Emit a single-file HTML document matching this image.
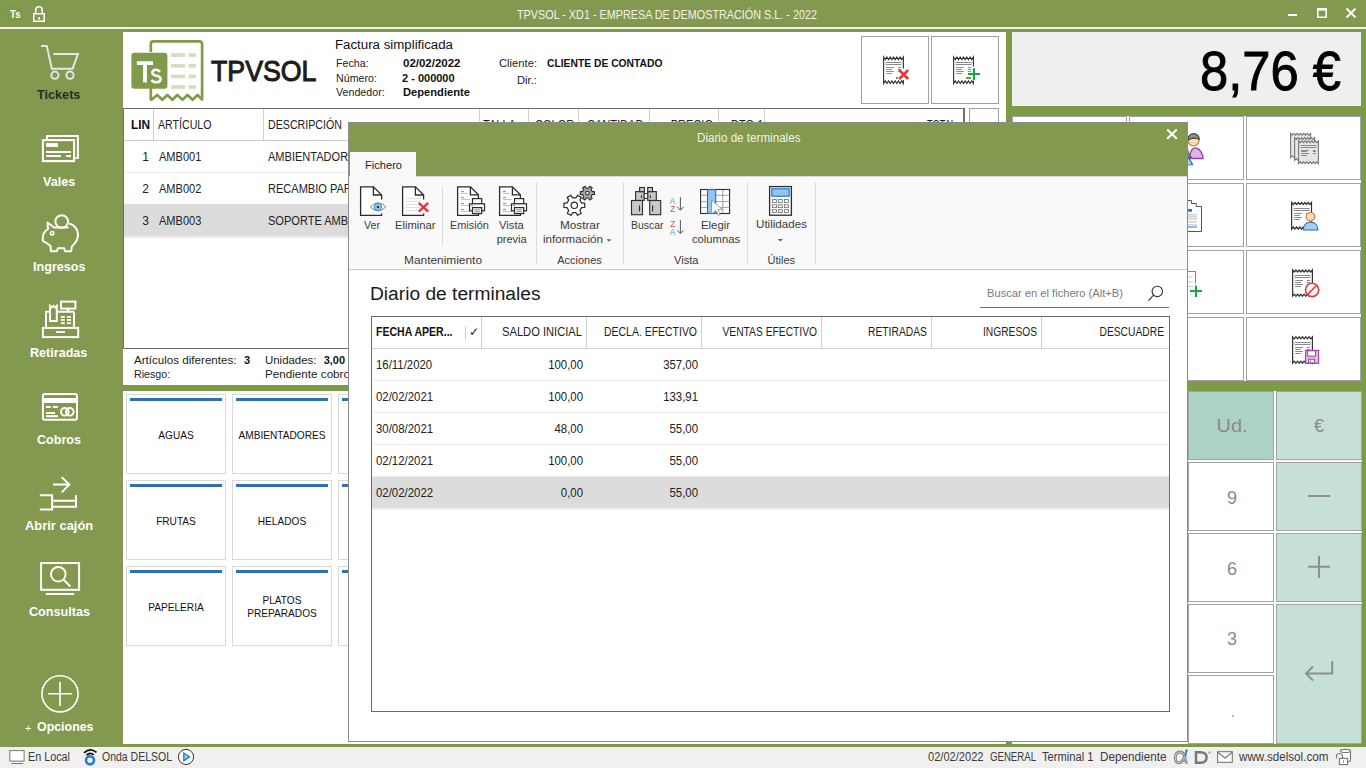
<!DOCTYPE html>
<html><head><meta charset="utf-8"><style>
html,body{margin:0;padding:0;width:1366px;height:768px;overflow:hidden;background:#83994f;font-family:"Liberation Sans", sans-serif;}
body>div,body>svg{position:absolute;box-sizing:border-box;}
.t{white-space:pre;}
</style></head><body>
<div style="left:0px;top:0px;width:1366px;height:27px;background:#83994f"></div>
<div style="left:0px;top:27px;width:1366px;height:2px;background:#f2f2f2"></div>
<div style="left:0px;top:29px;width:1366px;height:718px;background:#7d9a48"></div>
<div style="left:0px;top:29px;width:123px;height:718px;background:#83994f"></div>
<div style="left:123px;top:32px;width:883px;height:353px;background:#fff"></div>
<div style="left:123px;top:391px;width:883px;height:353px;background:#fff"></div>
<div style="left:1012px;top:32px;width:349px;height:74px;background:#efefef"></div>
<div style="left:1012px;top:116px;width:349px;height:265px;background:#fff"></div>
<div style="left:1012px;top:116px;width:115px;height:64px;border:1px solid #a3a3a3;background:#fff"></div>
<div style="left:1129px;top:116px;width:115px;height:64px;border:1px solid #a3a3a3;background:#fff"></div>
<div style="left:1246px;top:116px;width:115px;height:64px;border:1px solid #a3a3a3;background:#fff"></div>
<div style="left:1012px;top:183px;width:115px;height:64px;border:1px solid #a3a3a3;background:#fff"></div>
<div style="left:1129px;top:183px;width:115px;height:64px;border:1px solid #a3a3a3;background:#fff"></div>
<div style="left:1246px;top:183px;width:115px;height:64px;border:1px solid #a3a3a3;background:#fff"></div>
<div style="left:1012px;top:250px;width:115px;height:64px;border:1px solid #a3a3a3;background:#fff"></div>
<div style="left:1129px;top:250px;width:115px;height:64px;border:1px solid #a3a3a3;background:#fff"></div>
<div style="left:1246px;top:250px;width:115px;height:64px;border:1px solid #a3a3a3;background:#fff"></div>
<div style="left:1012px;top:317px;width:115px;height:64px;border:1px solid #a3a3a3;background:#fff"></div>
<div style="left:1129px;top:317px;width:115px;height:64px;border:1px solid #a3a3a3;background:#fff"></div>
<div style="left:1246px;top:317px;width:115px;height:64px;border:1px solid #a3a3a3;background:#fff"></div>
<div style="left:1012px;top:391px;width:350px;height:353px;background:#fff"></div>
<div style="left:1188px;top:391px;width:86px;height:69px;border:1px solid #a3a3a3;background:#acd3c4"></div>
<div style="left:1188px;top:462px;width:86px;height:69px;border:1px solid #a3a3a3;background:#fff"></div>
<div style="left:1188px;top:533px;width:86px;height:69px;border:1px solid #a3a3a3;background:#fff"></div>
<div style="left:1188px;top:604px;width:86px;height:69px;border:1px solid #a3a3a3;background:#fff"></div>
<div style="left:1188px;top:675px;width:86px;height:69px;border:1px solid #a3a3a3;background:#fff"></div>
<div style="left:1276px;top:391px;width:86px;height:69px;border:1px solid #a3a3a3;background:#c6e0d5"></div>
<div style="left:1276px;top:462px;width:86px;height:69px;border:1px solid #a3a3a3;background:#c6e0d5"></div>
<div style="left:1276px;top:533px;width:86px;height:69px;border:1px solid #a3a3a3;background:#c6e0d5"></div>
<div style="left:1276px;top:604px;width:86px;height:140px;border:1px solid #a3a3a3;background:#c6e0d5"></div>
<div style="left:0px;top:747px;width:1366px;height:21px;background:#f0f0f0"></div>
<div style="left:861px;top:36px;width:68px;height:68px;border:1px solid #a0a0a0;background:#fff"></div>
<div style="left:931px;top:36px;width:68px;height:68px;border:1px solid #a0a0a0;background:#fff"></div>
<div style="left:123px;top:108px;width:842px;height:241px;border:1px solid #6e6e6e;border-right:2px solid #6e6e6e"></div>
<div style="left:124px;top:140px;width:840px;height:1px;background:#c8c8c8"></div>
<div style="left:153px;top:109px;width:1px;height:31px;background:#d0d0d0"></div>
<div style="left:263px;top:109px;width:1px;height:31px;background:#d0d0d0"></div>
<div style="left:479px;top:109px;width:1px;height:31px;background:#d0d0d0"></div>
<div style="left:528px;top:109px;width:1px;height:31px;background:#d0d0d0"></div>
<div style="left:578px;top:109px;width:1px;height:31px;background:#d0d0d0"></div>
<div style="left:649px;top:109px;width:1px;height:31px;background:#d0d0d0"></div>
<div style="left:718px;top:109px;width:1px;height:31px;background:#d0d0d0"></div>
<div style="left:764px;top:109px;width:1px;height:31px;background:#d0d0d0"></div>
<div style="left:124px;top:172px;width:840px;height:1px;background:#ececec"></div>
<div style="left:124px;top:204px;width:840px;height:32px;background:#dcdcdc"></div>
<div style="left:124px;top:236px;width:840px;height:2px;background:#ececec"></div>
<div style="left:969px;top:108px;width:30px;height:30px;border:1px solid #a0a0a0"></div>
<div style="left:126px;top:394px;width:100px;height:80px;border:1px solid #d9d9d9;background:#fff"></div>
<div style="left:130px;top:398px;width:92px;height:3px;background:#2f70b5"></div>
<div style="left:232px;top:394px;width:100px;height:80px;border:1px solid #d9d9d9;background:#fff"></div>
<div style="left:236px;top:398px;width:92px;height:3px;background:#2f70b5"></div>
<div style="left:338px;top:394px;width:100px;height:80px;border:1px solid #d9d9d9;background:#fff"></div>
<div style="left:342px;top:398px;width:92px;height:3px;background:#2f70b5"></div>
<div style="left:126px;top:480px;width:100px;height:80px;border:1px solid #d9d9d9;background:#fff"></div>
<div style="left:130px;top:484px;width:92px;height:3px;background:#2f70b5"></div>
<div style="left:232px;top:480px;width:100px;height:80px;border:1px solid #d9d9d9;background:#fff"></div>
<div style="left:236px;top:484px;width:92px;height:3px;background:#2f70b5"></div>
<div style="left:338px;top:480px;width:100px;height:80px;border:1px solid #d9d9d9;background:#fff"></div>
<div style="left:342px;top:484px;width:92px;height:3px;background:#2f70b5"></div>
<div style="left:126px;top:566px;width:100px;height:80px;border:1px solid #d9d9d9;background:#fff"></div>
<div style="left:130px;top:570px;width:92px;height:3px;background:#2f70b5"></div>
<div style="left:232px;top:566px;width:100px;height:80px;border:1px solid #d9d9d9;background:#fff"></div>
<div style="left:236px;top:570px;width:92px;height:3px;background:#2f70b5"></div>
<div style="left:338px;top:566px;width:100px;height:80px;border:1px solid #d9d9d9;background:#fff"></div>
<div style="left:342px;top:570px;width:92px;height:3px;background:#2f70b5"></div>
<svg style="left:0;top:0" width="1366" height="768" viewBox="0 0 1366 768"><rect x="7.5" y="6" width="14.5" height="15" fill="#7a9a48"/><path d="M33.8 13.8 H44.2 V21.2 H33.8 Z" fill="none" stroke="#fff" stroke-width="1.5"/><path d="M35.8 13.8 V10 A3.2 3.2 0 0 1 42.2 10 V13.8" fill="none" stroke="#fff" stroke-width="1.5"/><rect x="38.2" y="17" width="1.8" height="2.6" fill="#fff"/><rect x="1288" y="14" width="9" height="2" fill="#fff"/><path d="M1317.8 8.8 H1326.2 V17.2 H1317.8 Z" fill="none" stroke="#fff" stroke-width="1.6"/><rect x="1317" y="8" width="10" height="2.6" fill="#fff"/><path d="M1346.5 8.5 L1355.5 17.5 M1355.5 8.5 L1346.5 17.5" stroke="#fff" stroke-width="1.8"/><path d="M41 45.9 H46.8 L51.8 68.7 H72.6 L77.9 54 H53.3" fill="none" stroke="#e6e6e6" stroke-width="2" stroke-linejoin="miter"/><circle cx="54.9" cy="75.2" r="3.6" fill="none" stroke="#e6e6e6" stroke-width="2"/><circle cx="70" cy="75.2" r="3.6" fill="none" stroke="#e6e6e6" stroke-width="2"/><path d="M47 139 V136 H77.9 V158 H75.5" fill="none" stroke="#ffffff" stroke-width="2"/><rect x="42.9" y="140.1" width="31.2" height="21" fill="none" stroke="#ffffff" stroke-width="2.1"/><rect x="46" y="143.1" width="12" height="3.8" fill="#ffffff"/><rect x="46" y="151" width="25" height="2" fill="#ffffff"/><rect x="46" y="155" width="15" height="2" fill="#ffffff"/><rect x="66" y="155" width="5" height="2" fill="#ffffff"/><circle cx="61.7" cy="221.5" r="6.3" fill="none" stroke="#ffffff" stroke-width="2"/><path d="M54.5 227.8 L47.5 222.5 L48 229 C45 231 43 234 43 236.5 C42.5 238 42.3 240 43.5 241.5 C46 242 48 244 50.5 246 L50.8 251.2 H56.8 L57.8 248.2 H64.2 L65.2 251.2 H71.2 L71.8 246.5 C76 243 78 239 78 234.5 C78 229 74 224.5 69 223.5 M54 227.6 H68.5" fill="none" stroke="#ffffff" stroke-width="2" stroke-linejoin="round"/><circle cx="52.1" cy="233.2" r="1.7" fill="none" stroke="#ffffff" stroke-width="1.6"/><rect x="61" y="301.6" width="14.4" height="7" fill="none" stroke="#ffffff" stroke-width="2"/><rect x="67" y="308.6" width="2.4" height="3" fill="#ffffff"/><path d="M50 311.8 H46 V327 M74 311.8 V327 M57.5 311.8 H74" fill="none" stroke="#ffffff" stroke-width="2"/><path d="M50 321 V306 L51.5 307.5 L53.3 305.8 L55 307.5 L56.8 305.8 V321 Z" fill="none" stroke="#ffffff" stroke-width="2" stroke-linejoin="miter"/><rect x="60.8" y="316" width="4" height="1.8" fill="#ffffff"/><rect x="67" y="316" width="4" height="1.8" fill="#ffffff"/><rect x="60.8" y="319" width="4" height="1.8" fill="#ffffff"/><rect x="67" y="319" width="4" height="1.8" fill="#ffffff"/><rect x="60.8" y="322.3" width="4" height="1.8" fill="#ffffff"/><rect x="67" y="322.3" width="4" height="1.8" fill="#ffffff"/><rect x="42.9" y="327.9" width="35.3" height="9.2" fill="none" stroke="#ffffff" stroke-width="2"/><rect x="56" y="331.2" width="9" height="1.8" fill="#ffffff"/><rect x="42.9" y="394" width="34.1" height="25.8" rx="2" fill="none" stroke="#ffffff" stroke-width="2"/><rect x="43" y="398" width="34" height="5" fill="#ffffff"/><rect x="46" y="406" width="4.7" height="2" fill="#ffffff"/><rect x="52.8" y="406" width="5.2" height="2" fill="#ffffff"/><rect x="46" y="412" width="9" height="2" fill="#ffffff"/><rect x="46" y="415.2" width="12" height="2" fill="#ffffff"/><circle cx="64.8" cy="411.8" r="3.8" fill="none" stroke="#ffffff" stroke-width="2"/><circle cx="69.8" cy="411.8" r="3.8" fill="none" stroke="#ffffff" stroke-width="2"/><path d="M53 484.6 H69.5 M61.7 477.3 L69.3 484.6 L61.7 492.4" fill="none" stroke="#ffffff" stroke-width="2"/><path d="M39.8 495.2 H52.1 V509.5 H39.8 M52.1 500.8 H76 M52.1 506.7 H76 M76 495.2 V507.7" fill="none" stroke="#ffffff" stroke-width="2"/><rect x="41.1" y="563" width="38" height="26.8" fill="none" stroke="#ffffff" stroke-width="2"/><rect x="45.8" y="593" width="28.4" height="2" fill="#ffffff"/><circle cx="58.3" cy="574.2" r="7.3" fill="none" stroke="#ffffff" stroke-width="2"/><path d="M63.3 579.4 L70.4 586.5" stroke="#ffffff" stroke-width="2"/><circle cx="60" cy="693.8" r="18.1" fill="none" stroke="#ffffff" stroke-width="1.6"/><path d="M48 693.8 H72 M60 681.7 V706" stroke="#ffffff" stroke-width="1.6"/><path d="M150.8 52 V44 Q150.8 41.4 153.4 41.4 H199.5 Q202.1 41.4 202.1 44 V99.5 L197.5 95 L192.6 99.8 L187.5 95 L182.5 99.8 L177.3 95 L172.4 99.8 L167.3 95 L162.3 99.8 L157.2 95 L151.4 99.8 L150.8 99.2 V88" fill="none" stroke="#7f9a4b" stroke-width="2.7" stroke-linejoin="round"/><rect x="131.4" y="52.8" width="36" height="36" rx="2.8" fill="#7f9a4b"/><path d="M136.9 63.2 H153 M145 63.2 V82.4" stroke="#fff" stroke-width="3.8"/><path d="M160 71.8 Q158 69.6 155.4 69.8 Q152.2 70.2 152.4 72.9 Q152.8 75.2 156.5 75.8 Q160.8 76.6 160.6 79.4 Q160.3 82.3 156.3 82.3 Q153 82.2 151.6 80" fill="none" stroke="#fff" stroke-width="2.6"/><rect x="171" y="53.2" width="14.1" height="3.7" fill="#d3ddc3"/><rect x="188.6" y="53.2" width="7.3" height="3.7" fill="#d3ddc3"/><rect x="171" y="64" width="14.1" height="3.7" fill="#d3ddc3"/><rect x="188.6" y="64" width="7.3" height="3.7" fill="#d3ddc3"/><rect x="171" y="74.6" width="14.1" height="3.7" fill="#d3ddc3"/><rect x="188.6" y="74.6" width="7.3" height="3.7" fill="#d3ddc3"/><rect x="171" y="85.1" width="14.1" height="3.7" fill="#d3ddc3"/><rect x="188.6" y="85.1" width="7.3" height="3.7" fill="#d3ddc3"/><path d="M883.60 57.00 L885.25 59.60 L886.90 57.00 L888.55 59.60 L890.20 57.00 L891.85 59.60 L893.50 57.00 L895.15 59.60 L896.80 57.00 L898.45 59.60 L900.10 57.00 L901.75 59.60 L903.40 57.00 L903.40 83.50 L901.75 80.90 L900.10 83.50 L898.45 80.90 L896.80 83.50 L895.15 80.90 L893.50 83.50 L891.85 80.90 L890.20 83.50 L888.55 80.90 L886.90 83.50 L885.25 80.90 L883.60 83.50 Z" fill="#fff" stroke="#333" stroke-width="1.1" stroke-linejoin="miter"/><rect x="886.17" y="62.5" width="14.65" height="2" fill="none" stroke="#8a8a8a" stroke-width="1"/><line x1="886.17" y1="67.5" x2="893.90" y2="67.5" stroke="#8a8a8a" stroke-width="1"/><line x1="897.86" y1="67.5" x2="900.83" y2="67.5" stroke="#8a8a8a" stroke-width="1"/><line x1="886.17" y1="69.5" x2="891.92" y2="69.5" stroke="#8a8a8a" stroke-width="1"/><line x1="897.86" y1="69.5" x2="900.83" y2="69.5" stroke="#8a8a8a" stroke-width="1"/><line x1="886.17" y1="71.5" x2="893.90" y2="71.5" stroke="#8a8a8a" stroke-width="1"/><line x1="897.86" y1="71.5" x2="900.83" y2="71.5" stroke="#8a8a8a" stroke-width="1"/><line x1="886.17" y1="73.5" x2="891.92" y2="73.5" stroke="#8a8a8a" stroke-width="1"/><rect x="902" y="68.5" width="3" height="11.5" fill="#fff"/><path d="M899.2 70 L908.2 79 M908.2 70 L899.2 79" stroke="#e8363c" stroke-width="2.6"/><rect x="896" y="77" width="2" height="2" fill="#6fa03a"/><path d="M953.60 57.00 L955.25 59.60 L956.90 57.00 L958.55 59.60 L960.20 57.00 L961.85 59.60 L963.50 57.00 L965.15 59.60 L966.80 57.00 L968.45 59.60 L970.10 57.00 L971.75 59.60 L973.40 57.00 L973.40 83.50 L971.75 80.90 L970.10 83.50 L968.45 80.90 L966.80 83.50 L965.15 80.90 L963.50 83.50 L961.85 80.90 L960.20 83.50 L958.55 80.90 L956.90 83.50 L955.25 80.90 L953.60 83.50 Z" fill="#fff" stroke="#333" stroke-width="1.1" stroke-linejoin="miter"/><rect x="956.17" y="62.5" width="14.65" height="2" fill="none" stroke="#8a8a8a" stroke-width="1"/><line x1="956.17" y1="67.5" x2="963.90" y2="67.5" stroke="#8a8a8a" stroke-width="1"/><line x1="967.86" y1="67.5" x2="970.83" y2="67.5" stroke="#8a8a8a" stroke-width="1"/><line x1="956.17" y1="69.5" x2="961.92" y2="69.5" stroke="#8a8a8a" stroke-width="1"/><line x1="967.86" y1="69.5" x2="970.83" y2="69.5" stroke="#8a8a8a" stroke-width="1"/><line x1="956.17" y1="71.5" x2="963.90" y2="71.5" stroke="#8a8a8a" stroke-width="1"/><line x1="967.86" y1="71.5" x2="970.83" y2="71.5" stroke="#8a8a8a" stroke-width="1"/><line x1="956.17" y1="73.5" x2="961.92" y2="73.5" stroke="#8a8a8a" stroke-width="1"/><rect x="972" y="66.5" width="3" height="14" fill="#fff"/><rect x="966" y="77" width="5" height="2" fill="#7a9a3a"/><path d="M968 74 H980 M974 68.2 V79.9" stroke="#12a84a" stroke-width="2"/><path d="M1189.5 158.5 Q1190 150 1194 148.2 L1196.5 148.2 Q1202.5 150.5 1203 158.5 Z" fill="#dcb6e0" stroke="#9b3fa0" stroke-width="1.3"/><path d="M1187 146 Q1188 154 1191.5 157 L1189 158 Q1187 156 1186.5 150 Z" fill="#8a8a8a" stroke="#333" stroke-width="0.8"/><circle cx="1193.6" cy="140.6" r="5.4" fill="#fbd9bc" stroke="#c87533" stroke-width="1.1"/><path d="M1188 140 Q1188 133.6 1193.6 133.6 Q1199.2 133.6 1199.3 139.6 Q1194.5 136.5 1188 140 Z" fill="#8c8c8c" stroke="#2e2e2e" stroke-width="1"/><path d="M1186 165 L1186 157.5 Q1190 158 1192.5 164.8 Z" fill="#a3cfee" stroke="#1f70c0" stroke-width="1.2"/><path d="M1185 200.5 H1191.5 V203.5 H1196.3 V206.5 H1201.5 V231.5 H1185" fill="#fff" stroke="#555" stroke-width="1"/><rect x="1186" y="209" width="6" height="2.8" fill="#1f7ad0"/><rect x="1186" y="214.5" width="11" height="0.8" fill="#aaa"/><rect x="1186" y="216.5" width="11" height="0.8" fill="#aaa"/><rect x="1186" y="218.5" width="11" height="0.8" fill="#aaa"/><rect x="1186" y="221.5" width="11" height="0.8" fill="#aaa"/><rect x="1186" y="224.5" width="11" height="0.8" fill="#aaa"/><rect x="1186" y="226.5" width="11" height="1" fill="#1f7ad0"/><path d="M1185 271.5 H1195.5 V283.5" fill="none" stroke="#7a9a3a" stroke-width="1.1"/><rect x="1186" y="276.5" width="7" height="0.8" fill="#bbb"/><rect x="1186" y="281.5" width="7" height="0.8" fill="#bbb"/><rect x="1186" y="286" width="7" height="0.8" fill="#bbb"/><path d="M1190 291 H1202 M1196 285.5 V297" stroke="#12a84a" stroke-width="2.1"/><path d="M1290.60 133.40 L1292.27 135.20 L1293.93 133.40 L1295.60 135.20 L1297.27 133.40 L1298.93 135.20 L1300.60 133.40 L1302.27 135.20 L1303.93 133.40 L1305.60 135.20 L1307.27 133.40 L1308.93 135.20 L1310.60 133.40 L1310.60 157.50 L1308.93 155.70 L1307.27 157.50 L1305.60 155.70 L1303.93 157.50 L1302.27 155.70 L1300.60 157.50 L1298.93 155.70 L1297.27 157.50 L1295.60 155.70 L1293.93 157.50 L1292.27 155.70 L1290.60 157.50 Z" fill="#e6e6e6" stroke="#777" stroke-width="1.1" stroke-linejoin="miter"/><path d="M1294.60 137.60 L1296.27 139.40 L1297.93 137.60 L1299.60 139.40 L1301.27 137.60 L1302.93 139.40 L1304.60 137.60 L1306.27 139.40 L1307.93 137.60 L1309.60 139.40 L1311.27 137.60 L1312.93 139.40 L1314.60 137.60 L1314.60 160.40 L1312.93 158.60 L1311.27 160.40 L1309.60 158.60 L1307.93 160.40 L1306.27 158.60 L1304.60 160.40 L1302.93 158.60 L1301.27 160.40 L1299.60 158.60 L1297.93 160.40 L1296.27 158.60 L1294.60 160.40 Z" fill="#e6e6e6" stroke="#777" stroke-width="1.1" stroke-linejoin="miter"/><path d="M1298.60 140.80 L1300.25 142.60 L1301.90 140.80 L1303.55 142.60 L1305.20 140.80 L1306.85 142.60 L1308.50 140.80 L1310.15 142.60 L1311.80 140.80 L1313.45 142.60 L1315.10 140.80 L1316.75 142.60 L1318.40 140.80 L1318.40 163.60 L1316.75 161.80 L1315.10 163.60 L1313.45 161.80 L1311.80 163.60 L1310.15 161.80 L1308.50 163.60 L1306.85 161.80 L1305.20 163.60 L1303.55 161.80 L1301.90 163.60 L1300.25 161.80 L1298.60 163.60 Z" fill="#e6e6e6" stroke="#777" stroke-width="1.1" stroke-linejoin="miter"/><rect x="1301.17" y="145.5" width="14.65" height="2" fill="none" stroke="#888" stroke-width="1"/><line x1="1301.17" y1="150.5" x2="1308.90" y2="150.5" stroke="#888" stroke-width="1"/><line x1="1312.86" y1="150.5" x2="1315.83" y2="150.5" stroke="#888" stroke-width="1"/><line x1="1301.17" y1="151.5" x2="1306.92" y2="151.5" stroke="#888" stroke-width="1"/><line x1="1312.86" y1="151.5" x2="1315.83" y2="151.5" stroke="#888" stroke-width="1"/><line x1="1301.17" y1="153.5" x2="1308.90" y2="153.5" stroke="#888" stroke-width="1"/><line x1="1312.86" y1="153.5" x2="1315.83" y2="153.5" stroke="#888" stroke-width="1"/><line x1="1301.17" y1="155.5" x2="1306.92" y2="155.5" stroke="#888" stroke-width="1"/><path d="M1291.60 202.50 L1293.26 204.50 L1294.92 202.50 L1296.57 204.50 L1298.23 202.50 L1299.89 204.50 L1301.55 202.50 L1303.21 204.50 L1304.87 202.50 L1306.53 204.50 L1308.18 202.50 L1309.84 204.50 L1311.50 202.50 L1311.50 229.00 L1309.84 227.00 L1308.18 229.00 L1306.53 227.00 L1304.87 229.00 L1303.21 227.00 L1301.55 229.00 L1299.89 227.00 L1298.23 229.00 L1296.57 227.00 L1294.92 229.00 L1293.26 227.00 L1291.60 229.00 Z" fill="#fff" stroke="#333" stroke-width="1.2" stroke-linejoin="miter"/><rect x="1294.19" y="208.5" width="14.73" height="2" fill="none" stroke="#8a8a8a" stroke-width="1"/><line x1="1294.19" y1="213.5" x2="1301.95" y2="213.5" stroke="#8a8a8a" stroke-width="1"/><line x1="1305.93" y1="213.5" x2="1308.91" y2="213.5" stroke="#8a8a8a" stroke-width="1"/><line x1="1294.19" y1="215.5" x2="1299.96" y2="215.5" stroke="#8a8a8a" stroke-width="1"/><line x1="1305.93" y1="215.5" x2="1308.91" y2="215.5" stroke="#8a8a8a" stroke-width="1"/><line x1="1294.19" y1="217.5" x2="1301.95" y2="217.5" stroke="#8a8a8a" stroke-width="1"/><line x1="1305.93" y1="217.5" x2="1308.91" y2="217.5" stroke="#8a8a8a" stroke-width="1"/><line x1="1294.19" y1="219.5" x2="1299.96" y2="219.5" stroke="#8a8a8a" stroke-width="1"/><path d="M1303.2 230 Q1303.5 222.5 1310.5 222 Q1317.6 222.5 1318 230 Z" fill="#a3cfee" stroke="#1f70c0" stroke-width="1.1"/><circle cx="1310.5" cy="216.8" r="4.3" fill="#fbd9bc" stroke="#c87533" stroke-width="1.1"/><path d="M1292.60 270.00 L1294.25 272.00 L1295.90 270.00 L1297.55 272.00 L1299.20 270.00 L1300.85 272.00 L1302.50 270.00 L1304.15 272.00 L1305.80 270.00 L1307.45 272.00 L1309.10 270.00 L1310.75 272.00 L1312.40 270.00 L1312.40 296.20 L1310.75 294.20 L1309.10 296.20 L1307.45 294.20 L1305.80 296.20 L1304.15 294.20 L1302.50 296.20 L1300.85 294.20 L1299.20 296.20 L1297.55 294.20 L1295.90 296.20 L1294.25 294.20 L1292.60 296.20 Z" fill="#fff" stroke="#333" stroke-width="1.2" stroke-linejoin="miter"/><rect x="1295.17" y="275.5" width="14.65" height="2" fill="none" stroke="#8a8a8a" stroke-width="1"/><line x1="1295.17" y1="280.5" x2="1302.90" y2="280.5" stroke="#8a8a8a" stroke-width="1"/><line x1="1306.86" y1="280.5" x2="1309.83" y2="280.5" stroke="#8a8a8a" stroke-width="1"/><line x1="1295.17" y1="282.5" x2="1300.92" y2="282.5" stroke="#8a8a8a" stroke-width="1"/><line x1="1306.86" y1="282.5" x2="1309.83" y2="282.5" stroke="#8a8a8a" stroke-width="1"/><line x1="1295.17" y1="284.5" x2="1302.90" y2="284.5" stroke="#8a8a8a" stroke-width="1"/><line x1="1306.86" y1="284.5" x2="1309.83" y2="284.5" stroke="#8a8a8a" stroke-width="1"/><line x1="1295.17" y1="286.5" x2="1300.92" y2="286.5" stroke="#8a8a8a" stroke-width="1"/><circle cx="1312.1" cy="289.9" r="6.6" fill="#fff" stroke="#e8363c" stroke-width="1.6"/><path d="M1316.8 285.2 L1307.4 294.6" stroke="#e8363c" stroke-width="1.6"/><path d="M1292.60 336.80 L1294.25 338.80 L1295.90 336.80 L1297.55 338.80 L1299.20 336.80 L1300.85 338.80 L1302.50 336.80 L1304.15 338.80 L1305.80 336.80 L1307.45 338.80 L1309.10 336.80 L1310.75 338.80 L1312.40 336.80 L1312.40 363.20 L1310.75 361.20 L1309.10 363.20 L1307.45 361.20 L1305.80 363.20 L1304.15 361.20 L1302.50 363.20 L1300.85 361.20 L1299.20 363.20 L1297.55 361.20 L1295.90 363.20 L1294.25 361.20 L1292.60 363.20 Z" fill="#fff" stroke="#333" stroke-width="1.2" stroke-linejoin="miter"/><rect x="1295.17" y="342.5" width="14.65" height="2" fill="none" stroke="#8a8a8a" stroke-width="1"/><line x1="1295.17" y1="347.5" x2="1302.90" y2="347.5" stroke="#8a8a8a" stroke-width="1"/><line x1="1306.86" y1="347.5" x2="1309.83" y2="347.5" stroke="#8a8a8a" stroke-width="1"/><line x1="1295.17" y1="349.5" x2="1300.92" y2="349.5" stroke="#8a8a8a" stroke-width="1"/><line x1="1306.86" y1="349.5" x2="1309.83" y2="349.5" stroke="#8a8a8a" stroke-width="1"/><line x1="1295.17" y1="351.5" x2="1302.90" y2="351.5" stroke="#8a8a8a" stroke-width="1"/><line x1="1306.86" y1="351.5" x2="1309.83" y2="351.5" stroke="#8a8a8a" stroke-width="1"/><line x1="1295.17" y1="353.5" x2="1300.92" y2="353.5" stroke="#8a8a8a" stroke-width="1"/><rect x="1305.6" y="350.4" width="13" height="12.9" fill="#e2c3e0" stroke="#9b3fa0" stroke-width="1.1"/><rect x="1307.6" y="350.8" width="8" height="5.3" fill="#fff" stroke="#9b3fa0" stroke-width="1"/><rect x="1308.6" y="359.2" width="6" height="3.7" fill="#fff" stroke="#9b3fa0" stroke-width="1"/><rect x="1310" y="360.5" width="1" height="1" fill="#555"/><rect x="1308" y="495" width="22" height="2" fill="#8f8f8f"/><path d="M1308 566.8 H1330 M1319 555.8 V577.9" stroke="#8f8f8f" stroke-width="2"/><path d="M1332.2 661 V673.4 H1306 M1313 666.5 L1306 673.4 L1313 680.6" fill="none" stroke="#8f8f8f" stroke-width="2"/><rect x="9.8" y="750.6" width="14.3" height="10.5" fill="#fff" stroke="#777" stroke-width="1"/><rect x="11.4" y="763" width="11.5" height="1" fill="#777"/><circle cx="90" cy="760.3" r="4" fill="none" stroke="#1f7ad0" stroke-width="2.6"/><path d="M84 752.8 Q90 747 96.5 752.3 M86.5 755.2 Q90 751.8 93.8 754.8" fill="none" stroke="#111" stroke-width="1.7"/><circle cx="186" cy="756.9" r="7.6" fill="#fff" stroke="#333" stroke-width="1"/><path d="M183.8 753 L189.6 756.9 L183.8 760.8 Z" fill="#9ccbf0" stroke="#1f7ad0" stroke-width="1.3"/><path d="M1185.5 754.5 Q1183 762.5 1179.5 762.8 Q1175.2 763 1175.2 757.5 Q1175.5 752 1180 752 Q1184 752 1185 758 Q1185.8 762.5 1187.5 763" fill="none" stroke="#7a7a7a" stroke-width="2.8"/><path d="M1185.5 754.5 Q1183 762.5 1179.5 762.8 Q1175.2 763 1175.2 757.5 Q1175.5 752 1180 752 Q1184 752 1185 758 Q1185.8 762.5 1187.5 763" fill="none" stroke="#f0f0f0" stroke-width="0.8"/><path d="M1185.5 749.5 L1188 749.5 L1185.5 757.8 L1184.3 757.5 Z" fill="#2f86d8"/><path d="M1196 752.2 H1200.5 Q1206.6 752.2 1206.6 757.5 Q1206.6 762.8 1200.5 762.8 H1196 Z" fill="none" stroke="#777" stroke-width="2.4"/><rect x="1208.3" y="751.5" width="2.5" height="2" fill="#aaa"/><rect x="1217.6" y="751.7" width="14.7" height="10.6" fill="#fff" stroke="#777" stroke-width="1.1"/><path d="M1218 752.5 L1225 758 L1232 752.5" fill="none" stroke="#777" stroke-width="1.1"/><path d="M1340.5 751 Q1340.5 749.4 1345.5 749.4 Q1350.5 749.4 1350.5 751 V760 Q1350.5 761.5 1347.5 761.8" fill="#fff" stroke="#777" stroke-width="1.1"/><ellipse cx="1345.5" cy="751" rx="5" ry="1.5" fill="#fff" stroke="#777" stroke-width="1.1"/><path d="M1336.5 758.5 V756.5 Q1336.5 753.5 1339.5 753.5 Q1342.5 753.5 1342.5 756.5 V758.3" fill="none" stroke="#777" stroke-width="1.1"/><rect x="1339.4" y="758.4" width="8.2" height="6.2" fill="#fff" stroke="#777" stroke-width="1.1"/><rect x="1343" y="760.5" width="1" height="2" fill="#777"/></svg>
<div class="t" id="t0" style="left:517px;transform-origin:0 0;top:8.40px;font-size:13px;line-height:13px;font-weight:400;color:#f3f3ea;transform:scaleX(0.8316);"><span>TPVSOL - XD1 - EMPRESA DE DEMOSTRACIÓN S.L. - 2022</span></div>
<div class="t" id="t1" style="left:10px;transform-origin:0 0;top:8.86px;font-size:11px;line-height:11px;font-weight:700;color:#fff;transform:scaleX(0.8727);"><span>Ts</span></div>
<div class="t" id="t2" style="left:37.1px;transform-origin:0 0;top:88.29px;font-size:13.5px;line-height:13.5px;font-weight:700;color:#2a2f22;transform:scaleX(0.9377);"><span>Tickets</span></div>
<div class="t" id="t3" style="left:42.9px;transform-origin:0 0;top:174.59px;font-size:13.5px;line-height:13.5px;font-weight:700;color:#fff;transform:scaleX(0.9350);"><span>Vales</span></div>
<div class="t" id="t4" style="left:33.0px;transform-origin:0 0;top:260.49px;font-size:13.5px;line-height:13.5px;font-weight:700;color:#fff;transform:scaleX(0.9328);"><span>Ingresos</span></div>
<div class="t" id="t5" style="left:29.9px;transform-origin:0 0;top:346.49px;font-size:13.5px;line-height:13.5px;font-weight:700;color:#fff;transform:scaleX(0.9312);"><span>Retiradas</span></div>
<div class="t" id="t6" style="left:36.7px;transform-origin:0 0;top:432.54px;font-size:13.5px;line-height:13.5px;font-weight:700;color:#fff;transform:scaleX(0.9312);"><span>Cobros</span></div>
<div class="t" id="t7" style="left:24.7px;transform-origin:0 0;top:518.59px;font-size:13.5px;line-height:13.5px;font-weight:700;color:#fff;transform:scaleX(0.9570);"><span>Abrir cajón</span></div>
<div class="t" id="t8" style="left:28.5px;transform-origin:0 0;top:604.59px;font-size:13.5px;line-height:13.5px;font-weight:700;color:#fff;transform:scaleX(0.9346);"><span>Consultas</span></div>
<div class="t" id="t9" style="left:25px;transform-origin:0 0;top:722.56px;font-size:11px;line-height:11px;font-weight:400;color:#fff;"><span>+</span></div>
<div class="t" id="t10" style="left:37.3px;transform-origin:0 0;top:720.49px;font-size:13.5px;line-height:13.5px;font-weight:700;color:#fff;transform:scaleX(0.9185);"><span>Opciones</span></div>
<div class="t" id="t11" style="left:335px;transform-origin:0 0;top:39.42px;font-size:12.5px;line-height:12.5px;font-weight:400;color:#111;transform:scaleX(1.0616);"><span>Factura simplificada</span></div>
<div class="t" id="t12" style="left:335.5px;transform-origin:0 0;top:57.76px;font-size:11px;line-height:11px;font-weight:400;color:#222;transform:scaleX(0.9700);"><span>Fecha:</span></div>
<div class="t" id="t13" style="left:335.5px;transform-origin:0 0;top:72.66px;font-size:11px;line-height:11px;font-weight:400;color:#222;transform:scaleX(0.9700);"><span>Número:</span></div>
<div class="t" id="t14" style="left:335.5px;transform-origin:0 0;top:87.46px;font-size:11px;line-height:11px;font-weight:400;color:#222;transform:scaleX(0.9700);"><span>Vendedor:</span></div>
<div class="t" id="t15" style="left:403px;transform-origin:0 0;top:57.76px;font-size:11px;line-height:11px;font-weight:700;color:#111;transform:scaleX(1.0443);"><span>02/02/2022</span></div>
<div class="t" id="t16" style="left:402px;transform-origin:0 0;top:72.66px;font-size:11px;line-height:11px;font-weight:700;color:#111;"><span>2 - 000000</span></div>
<div class="t" id="t17" style="left:402.5px;transform-origin:0 0;top:87.46px;font-size:11px;line-height:11px;font-weight:700;color:#111;transform:scaleX(1.0149);"><span>Dependiente</span></div>
<div class="t" id="t18" style="left:498.5px;transform-origin:0 0;top:57.86px;font-size:11px;line-height:11px;font-weight:400;color:#222;transform:scaleX(1.0189);"><span>Cliente:</span></div>
<div class="t" id="t19" style="left:546.5px;transform-origin:0 0;top:57.86px;font-size:11px;line-height:11px;font-weight:700;color:#111;transform:scaleX(0.9371);"><span>CLIENTE DE CONTADO</span></div>
<div class="t" id="t20" style="left:-63.5px;width:600px;text-align:right;transform-origin:100% 0;top:75.06px;font-size:11px;line-height:11px;font-weight:400;color:#222;transform:scaleX(1.0224);"><span>Dir.:</span></div>
<div class="t" id="t21" style="left:130.5px;transform-origin:0 0;top:118.93px;font-size:12px;line-height:12px;font-weight:700;color:#111;transform:scaleX(0.9822);"><span>LIN</span></div>
<div class="t" id="t22" style="left:158.3px;transform-origin:0 0;top:118.93px;font-size:12px;line-height:12px;font-weight:400;color:#222;transform:scaleX(0.8848);"><span>ARTÍCULO</span></div>
<div class="t" id="t23" style="left:268.2px;transform-origin:0 0;top:118.93px;font-size:12px;line-height:12px;font-weight:400;color:#222;transform:scaleX(0.8879);"><span>DESCRIPCIÓN</span></div>
<div class="t" id="t24" style="left:483.2px;transform-origin:0 0;top:118.93px;font-size:12px;line-height:12px;font-weight:400;color:#222;transform:scaleX(0.9200);"><span>TALLA</span></div>
<div class="t" id="t25" style="left:534.7px;transform-origin:0 0;top:118.93px;font-size:12px;line-height:12px;font-weight:400;color:#222;transform:scaleX(0.9200);"><span>COLOR</span></div>
<div class="t" id="t26" style="left:586.9px;transform-origin:0 0;top:118.93px;font-size:12px;line-height:12px;font-weight:400;color:#222;transform:scaleX(0.9200);"><span>CANTIDAD</span></div>
<div class="t" id="t27" style="left:113px;width:600px;text-align:right;transform-origin:100% 0;top:118.93px;font-size:12px;line-height:12px;font-weight:400;color:#222;transform:scaleX(0.9200);"><span>PRECIO</span></div>
<div class="t" id="t28" style="left:730.5px;transform-origin:0 0;top:118.93px;font-size:12px;line-height:12px;font-weight:400;color:#222;transform:scaleX(0.9200);"><span>DTO.1</span></div>
<div class="t" id="t29" style="left:356.29999999999995px;width:600px;text-align:right;transform-origin:100% 0;top:118.93px;font-size:12px;line-height:12px;font-weight:400;color:#222;transform:scaleX(0.7717);"><span>TOTAL</span></div>
<div class="t" id="t30" style="left:-451px;width:600px;text-align:right;transform-origin:100% 0;top:151.03px;font-size:12px;line-height:12px;font-weight:400;color:#222;"><span>1</span></div>
<div class="t" id="t31" style="left:158.5px;transform-origin:0 0;top:151.03px;font-size:12px;line-height:12px;font-weight:400;color:#222;transform:scaleX(0.9200);"><span>AMB001</span></div>
<div class="t" id="t32" style="left:268.4px;transform-origin:0 0;top:151.03px;font-size:12px;line-height:12px;font-weight:400;color:#222;transform:scaleX(0.9200);"><span>AMBIENTADOR COCHE</span></div>
<div class="t" id="t33" style="left:-451px;width:600px;text-align:right;transform-origin:100% 0;top:183.03px;font-size:12px;line-height:12px;font-weight:400;color:#222;"><span>2</span></div>
<div class="t" id="t34" style="left:158.5px;transform-origin:0 0;top:183.03px;font-size:12px;line-height:12px;font-weight:400;color:#222;transform:scaleX(0.9200);"><span>AMB002</span></div>
<div class="t" id="t35" style="left:268.4px;transform-origin:0 0;top:183.03px;font-size:12px;line-height:12px;font-weight:400;color:#222;transform:scaleX(0.9200);"><span>RECAMBIO PARA AMBIENTADOR</span></div>
<div class="t" id="t36" style="left:-451px;width:600px;text-align:right;transform-origin:100% 0;top:215.03px;font-size:12px;line-height:12px;font-weight:400;color:#222;"><span>3</span></div>
<div class="t" id="t37" style="left:158.5px;transform-origin:0 0;top:215.03px;font-size:12px;line-height:12px;font-weight:400;color:#222;transform:scaleX(0.9200);"><span>AMB003</span></div>
<div class="t" id="t38" style="left:268.4px;transform-origin:0 0;top:215.03px;font-size:12px;line-height:12px;font-weight:400;color:#222;transform:scaleX(0.9200);"><span>SOPORTE AMBIENTADOR</span></div>
<div class="t" id="t39" style="left:134.2px;transform-origin:0 0;top:355.46px;font-size:11px;line-height:11px;font-weight:400;color:#222;transform:scaleX(1.0543);"><span>Artículos diferentes:</span></div>
<div class="t" id="t40" style="left:243.9px;transform-origin:0 0;top:355.46px;font-size:11px;line-height:11px;font-weight:700;color:#111;"><span>3</span></div>
<div class="t" id="t41" style="left:265.4px;transform-origin:0 0;top:355.46px;font-size:11px;line-height:11px;font-weight:400;color:#222;transform:scaleX(1.0394);"><span>Unidades:</span></div>
<div class="t" id="t42" style="left:323.7px;transform-origin:0 0;top:355.46px;font-size:11px;line-height:11px;font-weight:700;color:#111;"><span>3,00</span></div>
<div class="t" id="t43" style="left:134.2px;transform-origin:0 0;top:368.56px;font-size:11px;line-height:11px;font-weight:400;color:#222;transform:scaleX(0.9700);"><span>Riesgo:</span></div>
<div class="t" id="t44" style="left:265.4px;transform-origin:0 0;top:368.56px;font-size:11px;line-height:11px;font-weight:400;color:#222;transform:scaleX(1.0608);"><span>Pendiente cobro</span></div>
<div class="t" id="t45" style="left:-124px;width:600px;text-align:center;transform-origin:50% 0;top:429.61px;font-size:11px;line-height:11px;font-weight:400;color:#111;transform:scaleX(0.9200);"><span>AGUAS</span></div>
<div class="t" id="t46" style="left:-18px;width:600px;text-align:center;transform-origin:50% 0;top:429.61px;font-size:11px;line-height:11px;font-weight:400;color:#111;transform:scaleX(0.9200);"><span>AMBIENTADORES</span></div>
<div class="t" id="t47" style="left:-124px;width:600px;text-align:center;transform-origin:50% 0;top:515.61px;font-size:11px;line-height:11px;font-weight:400;color:#111;transform:scaleX(0.9200);"><span>FRUTAS</span></div>
<div class="t" id="t48" style="left:-18px;width:600px;text-align:center;transform-origin:50% 0;top:515.61px;font-size:11px;line-height:11px;font-weight:400;color:#111;transform:scaleX(0.9200);"><span>HELADOS</span></div>
<div class="t" id="t49" style="left:-124px;width:600px;text-align:center;transform-origin:50% 0;top:601.61px;font-size:11px;line-height:11px;font-weight:400;color:#111;transform:scaleX(0.9200);"><span>PAPELERIA</span></div>
<div class="t" id="t50" style="left:-18px;width:600px;text-align:center;transform-origin:50% 0;top:595.46px;font-size:11px;line-height:11px;font-weight:400;color:#111;transform:scaleX(0.9200);"><span>PLATOS</span></div>
<div class="t" id="t51" style="left:-18px;width:600px;text-align:center;transform-origin:50% 0;top:608.46px;font-size:11px;line-height:11px;font-weight:400;color:#111;transform:scaleX(0.9200);"><span>PREPARADOS</span></div>
<div class="t" id="t52" style="left:1199.5px;transform-origin:0 0;top:42.99px;font-size:56px;line-height:56px;font-weight:400;color:#000;transform:scaleX(0.9056);-webkit-text-stroke:0.9px #000;"><span>8,76 €</span></div>
<div class="t" id="t53" style="left:931.5px;width:600px;text-align:center;transform-origin:50% 0;top:416.75px;font-size:18px;line-height:18px;font-weight:400;color:#8a8a8a;transform:scaleX(1.1065);"><span>Ud.</span></div>
<div class="t" id="t54" style="left:1019px;width:600px;text-align:center;transform-origin:50% 0;top:416.75px;font-size:18px;line-height:18px;font-weight:400;color:#8a8a8a;"><span>€</span></div>
<div class="t" id="t55" style="left:932px;width:600px;text-align:center;transform-origin:50% 0;top:489.05px;font-size:18px;line-height:18px;font-weight:400;color:#8a8a8a;"><span>9</span></div>
<div class="t" id="t56" style="left:932px;width:600px;text-align:center;transform-origin:50% 0;top:559.65px;font-size:18px;line-height:18px;font-weight:400;color:#8a8a8a;"><span>6</span></div>
<div class="t" id="t57" style="left:932px;width:600px;text-align:center;transform-origin:50% 0;top:630.05px;font-size:18px;line-height:18px;font-weight:400;color:#8a8a8a;"><span>3</span></div>
<div class="t" id="t58" style="left:933px;width:600px;text-align:center;transform-origin:50% 0;top:705.37px;font-size:14px;line-height:14px;font-weight:400;color:#8a8a8a;"><span>.</span></div>
<div class="t" id="t59" style="left:28px;transform-origin:0 0;top:751.03px;font-size:12px;line-height:12px;font-weight:400;color:#3a3a3a;transform:scaleX(0.8993);"><span>En Local</span></div>
<div class="t" id="t60" style="left:101.6px;transform-origin:0 0;top:751.03px;font-size:12px;line-height:12px;font-weight:400;color:#3a3a3a;transform:scaleX(0.8745);"><span>Onda DELSOL</span></div>
<div class="t" id="t61" style="left:927.6px;transform-origin:0 0;top:751.03px;font-size:12px;line-height:12px;font-weight:400;color:#3a3a3a;transform:scaleX(0.9240);"><span>02/02/2022</span></div>
<div class="t" id="t62" style="left:989.6px;transform-origin:0 0;top:751.03px;font-size:12px;line-height:12px;font-weight:400;color:#3a3a3a;transform:scaleX(0.8020);"><span>GENERAL</span></div>
<div class="t" id="t63" style="left:1042.3px;transform-origin:0 0;top:751.03px;font-size:12px;line-height:12px;font-weight:400;color:#3a3a3a;transform:scaleX(0.9303);"><span>Terminal 1</span></div>
<div class="t" id="t64" style="left:1100.2px;transform-origin:0 0;top:751.03px;font-size:12px;line-height:12px;font-weight:400;color:#3a3a3a;transform:scaleX(0.9770);"><span>Dependiente</span></div>
<div class="t" id="t65" style="left:1239.2px;transform-origin:0 0;top:751.03px;font-size:12px;line-height:12px;font-weight:400;color:#3a3a3a;transform:scaleX(0.9725);"><span>www.sdelsol.com</span></div>
<div class="t" id="t66" style="left:211.3px;transform-origin:0 0;top:56.52px;font-size:29px;line-height:29px;font-weight:400;color:#1c1c1c;transform:scaleX(0.9219);-webkit-text-stroke:1px #1c1c1c;"><span>TPVSOL</span></div>
<div style="left:348px;top:122px;width:840px;height:620px;border:1px solid #8c8c8c;background:#fff"></div>
<div style="left:349px;top:123px;width:838px;height:53px;background:#83994f"></div>
<div style="left:350px;top:152px;width:66px;height:24px;background:#f9f9f9"></div>
<div style="left:349px;top:176px;width:838px;height:94px;background:#f9f9f9;border-top:1px solid #dadada;border-bottom:1px solid #cbcbcb"></div>
<div style="left:350px;top:176px;width:66px;height:1px;background:#f9f9f9"></div>
<div style="left:442px;top:187px;width:1px;height:59px;background:#dcdcdc"></div>
<div style="left:536px;top:182px;width:1px;height:82px;background:#dcdcdc"></div>
<div style="left:623px;top:182px;width:1px;height:82px;background:#dcdcdc"></div>
<div style="left:747px;top:182px;width:1px;height:82px;background:#dcdcdc"></div>
<div style="left:815px;top:182px;width:1px;height:82px;background:#dcdcdc"></div>
<div style="left:371px;top:316px;width:799px;height:396px;border:1px solid #6b6b6b"></div>
<div style="left:372px;top:348px;width:797px;height:1px;background:#cfcfcf"></div>
<div style="left:481px;top:317px;width:1px;height:31px;background:#d0d0d0"></div>
<div style="left:586px;top:317px;width:1px;height:31px;background:#d0d0d0"></div>
<div style="left:701px;top:317px;width:1px;height:31px;background:#d0d0d0"></div>
<div style="left:821px;top:317px;width:1px;height:31px;background:#d0d0d0"></div>
<div style="left:931px;top:317px;width:1px;height:31px;background:#d0d0d0"></div>
<div style="left:1041px;top:317px;width:1px;height:31px;background:#d0d0d0"></div>
<div style="left:465px;top:326px;width:1px;height:14px;background:#d0d0d0"></div>
<div style="left:372px;top:380px;width:797px;height:1px;background:#ececec"></div>
<div style="left:372px;top:412px;width:797px;height:1px;background:#ececec"></div>
<div style="left:372px;top:444px;width:797px;height:1px;background:#ececec"></div>
<div style="left:372px;top:476px;width:797px;height:1px;background:#ececec"></div>
<div style="left:372px;top:477px;width:797px;height:31px;background:#dcdcdc"></div>
<div style="left:372px;top:508px;width:797px;height:2px;background:#f1f1f1"></div>
<div style="left:980px;top:307px;width:189px;height:1px;background:#707070"></div>
<div class="t" id="t67" style="left:696.6px;transform-origin:0 0;top:131.73px;font-size:12px;line-height:12px;font-weight:400;color:#f3f3ea;transform:scaleX(0.9698);"><span>Diario de terminales</span></div>
<div class="t" id="t68" style="left:364.6px;transform-origin:0 0;top:159.66px;font-size:11px;line-height:11px;font-weight:400;color:#222;transform:scaleX(1.0085);"><span>Fichero</span></div>
<div class="t" id="t69" style="left:364.2px;transform-origin:0 0;top:219.76px;font-size:11px;line-height:11px;font-weight:400;color:#3b3b3b;transform:scaleX(0.9688);"><span>Ver</span></div>
<div class="t" id="t70" style="left:394.5px;transform-origin:0 0;top:219.76px;font-size:11px;line-height:11px;font-weight:400;color:#3b3b3b;transform:scaleX(1.0193);"><span>Eliminar</span></div>
<div class="t" id="t71" style="left:450.4px;transform-origin:0 0;top:219.76px;font-size:11px;line-height:11px;font-weight:400;color:#3b3b3b;transform:scaleX(0.9917);"><span>Emisión</span></div>
<div class="t" id="t72" style="left:499px;transform-origin:0 0;top:219.76px;font-size:11px;line-height:11px;font-weight:400;color:#3b3b3b;transform:scaleX(1.0220);"><span>Vista</span></div>
<div class="t" id="t73" style="left:496.7px;transform-origin:0 0;top:234.36px;font-size:11px;line-height:11px;font-weight:400;color:#3b3b3b;"><span>previa</span></div>
<div class="t" id="t74" style="left:403.5px;transform-origin:0 0;top:255.16px;font-size:11px;line-height:11px;font-weight:400;color:#3b3b3b;transform:scaleX(1.0810);"><span>Mantenimiento</span></div>
<div class="t" id="t75" style="left:559.5px;transform-origin:0 0;top:219.86px;font-size:11px;line-height:11px;font-weight:400;color:#3b3b3b;transform:scaleX(1.0676);"><span>Mostrar</span></div>
<div class="t" id="t76" style="left:543.4px;transform-origin:0 0;top:234.46px;font-size:11px;line-height:11px;font-weight:400;color:#3b3b3b;transform:scaleX(1.0552);"><span>información</span></div>
<div class="t" id="t77" style="left:557.2px;transform-origin:0 0;top:255.16px;font-size:11px;line-height:11px;font-weight:400;color:#3b3b3b;"><span>Acciones</span></div>
<div class="t" id="t78" style="left:630.8px;transform-origin:0 0;top:219.86px;font-size:11px;line-height:11px;font-weight:400;color:#3b3b3b;transform:scaleX(0.9489);"><span>Buscar</span></div>
<div class="t" id="t79" style="left:701.2px;transform-origin:0 0;top:219.86px;font-size:11px;line-height:11px;font-weight:400;color:#3b3b3b;transform:scaleX(1.0311);"><span>Elegir</span></div>
<div class="t" id="t80" style="left:691.5px;transform-origin:0 0;top:234.46px;font-size:11px;line-height:11px;font-weight:400;color:#3b3b3b;transform:scaleX(1.0196);"><span>columnas</span></div>
<div class="t" id="t81" style="left:673.5px;transform-origin:0 0;top:255.16px;font-size:11px;line-height:11px;font-weight:400;color:#3b3b3b;transform:scaleX(1.0097);"><span>Vista</span></div>
<div class="t" id="t82" style="left:755.6px;transform-origin:0 0;top:219.36px;font-size:11px;line-height:11px;font-weight:400;color:#3b3b3b;transform:scaleX(1.0556);"><span>Utilidades</span></div>
<div class="t" id="t83" style="left:767.5px;transform-origin:0 0;top:255.16px;font-size:11px;line-height:11px;font-weight:400;color:#3b3b3b;"><span>Útiles</span></div>
<div class="t" id="t84" style="left:370.2px;transform-origin:0 0;top:285.35px;font-size:18px;line-height:18px;font-weight:400;color:#1a1a1a;transform:scaleX(1.0651);"><span>Diario de terminales</span></div>
<div class="t" id="t85" style="left:986.6px;transform-origin:0 0;top:287.86px;font-size:11px;line-height:11px;font-weight:400;color:#7a7a7a;transform:scaleX(1.0134);"><span>Buscar en el fichero (Alt+B)</span></div>
<div class="t" id="t86" style="left:376.4px;transform-origin:0 0;top:326.43px;font-size:12px;line-height:12px;font-weight:700;color:#111;transform:scaleX(0.8780);"><span>FECHA APER...</span></div>
<div class="t" id="t87" style="left:-18.200000000000045px;width:600px;text-align:right;transform-origin:100% 0;top:326.43px;font-size:12px;line-height:12px;font-weight:400;color:#1e1e1e;transform:scaleX(0.9299);"><span>SALDO INICIAL</span></div>
<div class="t" id="t88" style="left:97px;width:600px;text-align:right;transform-origin:100% 0;top:326.43px;font-size:12px;line-height:12px;font-weight:400;color:#1e1e1e;transform:scaleX(0.8717);"><span>DECLA. EFECTIVO</span></div>
<div class="t" id="t89" style="left:217px;width:600px;text-align:right;transform-origin:100% 0;top:326.43px;font-size:12px;line-height:12px;font-weight:400;color:#1e1e1e;transform:scaleX(0.8554);"><span>VENTAS EFECTIVO</span></div>
<div class="t" id="t90" style="left:327px;width:600px;text-align:right;transform-origin:100% 0;top:326.43px;font-size:12px;line-height:12px;font-weight:400;color:#1e1e1e;transform:scaleX(0.8590);"><span>RETIRADAS</span></div>
<div class="t" id="t91" style="left:437px;width:600px;text-align:right;transform-origin:100% 0;top:326.43px;font-size:12px;line-height:12px;font-weight:400;color:#1e1e1e;transform:scaleX(0.8523);"><span>INGRESOS</span></div>
<div class="t" id="t92" style="left:564px;width:600px;text-align:right;transform-origin:100% 0;top:326.43px;font-size:12px;line-height:12px;font-weight:400;color:#1e1e1e;transform:scaleX(0.8559);"><span>DESCUADRE</span></div>
<div class="t" id="t93" style="left:469px;transform-origin:0 0;top:326.43px;font-size:12px;line-height:12px;font-weight:400;color:#222;"><span>✓</span></div>
<div class="t" id="t94" style="left:376.4px;transform-origin:0 0;top:358.73px;font-size:12px;line-height:12px;font-weight:400;color:#222;transform:scaleX(0.9500);"><span>16/11/2020</span></div>
<div class="t" id="t95" style="left:-17.5px;width:600px;text-align:right;transform-origin:100% 0;top:358.73px;font-size:12px;line-height:12px;font-weight:400;color:#222;transform:scaleX(0.9500);"><span>100,00</span></div>
<div class="t" id="t96" style="left:97.5px;width:600px;text-align:right;transform-origin:100% 0;top:358.73px;font-size:12px;line-height:12px;font-weight:400;color:#222;transform:scaleX(0.9500);"><span>357,00</span></div>
<div class="t" id="t97" style="left:376.4px;transform-origin:0 0;top:390.73px;font-size:12px;line-height:12px;font-weight:400;color:#222;transform:scaleX(0.9500);"><span>02/02/2021</span></div>
<div class="t" id="t98" style="left:-17.5px;width:600px;text-align:right;transform-origin:100% 0;top:390.73px;font-size:12px;line-height:12px;font-weight:400;color:#222;transform:scaleX(0.9500);"><span>100,00</span></div>
<div class="t" id="t99" style="left:97.5px;width:600px;text-align:right;transform-origin:100% 0;top:390.73px;font-size:12px;line-height:12px;font-weight:400;color:#222;transform:scaleX(0.9500);"><span>133,91</span></div>
<div class="t" id="t100" style="left:376.4px;transform-origin:0 0;top:422.73px;font-size:12px;line-height:12px;font-weight:400;color:#222;transform:scaleX(0.9500);"><span>30/08/2021</span></div>
<div class="t" id="t101" style="left:-17.5px;width:600px;text-align:right;transform-origin:100% 0;top:422.73px;font-size:12px;line-height:12px;font-weight:400;color:#222;transform:scaleX(0.9500);"><span>48,00</span></div>
<div class="t" id="t102" style="left:97.5px;width:600px;text-align:right;transform-origin:100% 0;top:422.73px;font-size:12px;line-height:12px;font-weight:400;color:#222;transform:scaleX(0.9500);"><span>55,00</span></div>
<div class="t" id="t103" style="left:376.4px;transform-origin:0 0;top:454.73px;font-size:12px;line-height:12px;font-weight:400;color:#222;transform:scaleX(0.9500);"><span>02/12/2021</span></div>
<div class="t" id="t104" style="left:-17.5px;width:600px;text-align:right;transform-origin:100% 0;top:454.73px;font-size:12px;line-height:12px;font-weight:400;color:#222;transform:scaleX(0.9500);"><span>100,00</span></div>
<div class="t" id="t105" style="left:97.5px;width:600px;text-align:right;transform-origin:100% 0;top:454.73px;font-size:12px;line-height:12px;font-weight:400;color:#222;transform:scaleX(0.9500);"><span>55,00</span></div>
<div class="t" id="t106" style="left:376.4px;transform-origin:0 0;top:486.73px;font-size:12px;line-height:12px;font-weight:400;color:#222;transform:scaleX(0.9500);"><span>02/02/2022</span></div>
<div class="t" id="t107" style="left:-17.5px;width:600px;text-align:right;transform-origin:100% 0;top:486.73px;font-size:12px;line-height:12px;font-weight:400;color:#222;transform:scaleX(0.9500);"><span>0,00</span></div>
<div class="t" id="t108" style="left:97.5px;width:600px;text-align:right;transform-origin:100% 0;top:486.73px;font-size:12px;line-height:12px;font-weight:400;color:#222;transform:scaleX(0.9500);"><span>55,00</span></div>
<svg style="left:0;top:0" width="1366" height="768" viewBox="0 0 1366 768"><path d="M360.6 186.8 H373.40000000000003 L381.6 195.0 V215.3 H360.6 Z" fill="#fff" stroke="none"/><path d="M381.6 213.6 V215.3 H360.6 V186.8 H373.40000000000003 L381.6 195.0 V199.6" fill="none" stroke="#2b2b2b" stroke-width="1.3" stroke-linejoin="miter"/><path d="M373.40000000000003 186.8 V195.0 H381.6" fill="none" stroke="#2b2b2b" stroke-width="1.3"/><path d="M370.2 206.9 Q378 198.8 385.9 206.9 Q378 215 370.2 206.9 Z" fill="#fff" stroke="#777" stroke-width="0.9"/><circle cx="378" cy="206.9" r="3.7" fill="#8cc4f0" stroke="#3b8ad6" stroke-width="1"/><circle cx="378" cy="206.9" r="1.2" fill="#333"/><path d="M402.6 186.8 H415.40000000000003 L423.6 195.0 V215.3 H402.6 Z" fill="#fff" stroke="none"/><path d="M423.6 213.6 V215.3 H402.6 V186.8 H415.40000000000003 L423.6 195.0 V199.6" fill="none" stroke="#2b2b2b" stroke-width="1.3" stroke-linejoin="miter"/><path d="M415.40000000000003 186.8 V195.0 H423.6" fill="none" stroke="#2b2b2b" stroke-width="1.3"/><rect x="406" y="197.9" width="14" height="0.9" fill="#dedede"/><rect x="406" y="200.9" width="14" height="0.9" fill="#dedede"/><rect x="406" y="203.9" width="14" height="0.9" fill="#dedede"/><rect x="406" y="207.0" width="14" height="0.9" fill="#dedede"/><rect x="406" y="210.0" width="14" height="0.9" fill="#dedede"/><path d="M418.8 202.8 L428.2 211.6 M428.2 202.8 L418.8 211.6" stroke="#e8363c" stroke-width="2.5"/><path d="M457.6 186.8 H470.4 L478.4 194.8 V215.3 H457.6 Z" fill="#fff" stroke="none"/><path d="M478.4 194.8 V215.3 H457.6 V186.8 H470.4 L478.4 194.8" fill="none" stroke="#2b2b2b" stroke-width="1.3" stroke-linejoin="miter"/><path d="M470.4 186.8 V194.8 H478.4" fill="none" stroke="#2b2b2b" stroke-width="1.3"/><rect x="461" y="190.8" width="3" height="1.3" fill="#f39200"/><rect x="461" y="192.9" width="7" height="0.9" fill="#bdbdbd"/><rect x="461" y="196.9" width="3" height="1.3" fill="#f39200"/><rect x="461" y="199.0" width="9" height="0.9" fill="#bdbdbd"/><rect x="461" y="202.9" width="3" height="1.3" fill="#f39200"/><rect x="461" y="205.0" width="9" height="0.9" fill="#bdbdbd"/><rect x="461" y="208.9" width="3" height="1.3" fill="#f39200"/><rect x="461" y="211.0" width="9" height="0.9" fill="#bdbdbd"/><rect x="472.5" y="198.6" width="9.2" height="5.4" fill="#fff" stroke="#2b2b2b" stroke-width="1.2"/><rect x="469.5" y="203.8" width="15" height="7" fill="#fff" stroke="#2b2b2b" stroke-width="1.2"/><rect x="472.5" y="207.6" width="9.2" height="6" fill="#fff" stroke="#2b2b2b" stroke-width="1.2"/><rect x="474.3" y="209.4" width="5.6" height="0.9" fill="#777"/><rect x="474.3" y="211.3" width="5.6" height="0.9" fill="#777"/><rect x="471.1" y="205.1" width="1.8" height="1" fill="#1f7ad0"/><path d="M499.6 186.8 H512.4 L520.4 194.8 V215.3 H499.6 Z" fill="#fff" stroke="none"/><path d="M520.4 194.8 V215.3 H499.6 V186.8 H512.4 L520.4 194.8" fill="none" stroke="#2b2b2b" stroke-width="1.3" stroke-linejoin="miter"/><path d="M512.4 186.8 V194.8 H520.4" fill="none" stroke="#2b2b2b" stroke-width="1.3"/><rect x="503" y="190.8" width="3" height="1.3" fill="#f39200"/><rect x="503" y="192.9" width="7" height="0.9" fill="#bdbdbd"/><rect x="503" y="196.9" width="3" height="1.3" fill="#f39200"/><rect x="503" y="199.0" width="9" height="0.9" fill="#bdbdbd"/><rect x="503" y="202.9" width="3" height="1.3" fill="#f39200"/><rect x="503" y="205.0" width="9" height="0.9" fill="#bdbdbd"/><rect x="503" y="208.9" width="3" height="1.3" fill="#f39200"/><rect x="503" y="211.0" width="9" height="0.9" fill="#bdbdbd"/><rect x="514.5" y="198.6" width="9.2" height="5.4" fill="#fff" stroke="#2b2b2b" stroke-width="1.2"/><rect x="511.5" y="203.8" width="15" height="7" fill="#fff" stroke="#2b2b2b" stroke-width="1.2"/><rect x="514.5" y="207.6" width="9.2" height="6" fill="#fff" stroke="#2b2b2b" stroke-width="1.2"/><rect x="516.3" y="209.4" width="5.6" height="0.9" fill="#777"/><rect x="516.3" y="211.3" width="5.6" height="0.9" fill="#777"/><rect x="513.1" y="205.1" width="1.8" height="1" fill="#1f7ad0"/><path d="M592.18 191.62 L594.46 191.67 L594.46 194.53 L592.18 194.58 L591.07 196.50 L592.17 198.50 L589.69 199.93 L588.51 197.98 L586.29 197.98 L585.11 199.93 L582.63 198.50 L583.73 196.50 L582.62 194.58 L580.34 194.53 L580.34 191.67 L582.62 191.62 L583.73 189.70 L582.63 187.70 L585.11 186.27 L586.29 188.22 L588.51 188.22 L589.69 186.27 L592.17 187.70 L591.07 189.70 Z" fill="#a9a9a9" stroke="#2b2b2b" stroke-width="1.1" stroke-linejoin="round"/><circle cx="587.4" cy="193.1" r="1.8" fill="#fff" stroke="#2b2b2b" stroke-width="1.1"/><path d="M581.56 203.05 L584.69 203.19 L584.69 207.41 L581.56 207.55 L579.88 210.46 L581.32 213.24 L577.67 215.35 L575.99 212.71 L572.61 212.71 L570.93 215.35 L567.28 213.24 L568.72 210.46 L567.04 207.55 L563.91 207.41 L563.91 203.19 L567.04 203.05 L568.72 200.14 L567.28 197.36 L570.93 195.25 L572.61 197.89 L575.99 197.89 L577.67 195.25 L581.32 197.36 L579.88 200.14 Z" fill="#fff" stroke="#2b2b2b" stroke-width="1.2" stroke-linejoin="round"/><circle cx="574.3" cy="205.3" r="3.2" fill="#fff" stroke="#2b2b2b" stroke-width="1.2"/><rect x="631.5" y="200.5" width="11" height="14.2" fill="#c8c8c8" stroke="#2b2b2b" stroke-width="1.1"/><rect x="649.7" y="200.5" width="11" height="14.2" fill="#c8c8c8" stroke="#2b2b2b" stroke-width="1.1"/><rect x="635.6" y="191.6" width="8.6" height="8.8" fill="#c8c8c8" stroke="#2b2b2b" stroke-width="1.1"/><rect x="647.7" y="191.6" width="8.6" height="8.8" fill="#c8c8c8" stroke="#2b2b2b" stroke-width="1.1"/><rect x="639.6" y="187.5" width="4.8" height="4.2" fill="#c8c8c8" stroke="#2b2b2b" stroke-width="1.1"/><rect x="647.7" y="187.5" width="4.8" height="4.2" fill="#c8c8c8" stroke="#2b2b2b" stroke-width="1.1"/><rect x="644.2" y="193.6" width="3.5" height="4.8" fill="#fff" stroke="#2b2b2b" stroke-width="1"/><path d="M639.5 205.4 V211.5 M652.6 205.4 V211.5 M641.5 195.2 V197.9 M650.3 195.2 V197.9" stroke="#2b2b2b" stroke-width="1.1"/><text x="669.8" y="203.6" font-family="Liberation Sans" font-size="8.2" fill="#4a9ee0">A</text><text x="670.2" y="212.2" font-family="Liberation Sans" font-size="8.2" fill="#ee4a4a">Z</text><text x="670.2" y="227.2" font-family="Liberation Sans" font-size="8.2" fill="#ee4a4a">Z</text><text x="669.8" y="234.6" font-family="Liberation Sans" font-size="8.2" fill="#4a9ee0">A</text><path d="M680.4 197.2 V210 M677.3 207 L680.4 210.2 L683.5 207 M680.4 220 V233.2 M677.3 230.2 L680.4 233.4 L683.5 230.2" fill="none" stroke="#444" stroke-width="0.9"/><rect x="700.6" y="189.5" width="29" height="24" fill="#fff" stroke="#2b2b2b" stroke-width="1.1"/><path d="M715.8 195.3 H729.5 M715.8 201.6 H729.5 M715.8 207.4 H729.5 M701 195.3 H707.3 M701 201.6 H707.3 M701 207.4 H707.3 M722.75 190 V213.3" stroke="#999" stroke-width="0.9"/><rect x="707.5" y="189.6" width="8.2" height="23.8" fill="#92c6ee" stroke="#1f6fc0" stroke-width="1.1"/><path d="M711.5 200.3 L722.3 209.2 L717.8 209.6 L720 214.5 L718.2 215.4 L716 210.6 L711.5 213.8 Z" fill="#fff" stroke="#888" stroke-width="0.8"/><rect x="769.6" y="186.6" width="21.8" height="28.6" fill="#fff" stroke="#2b2b2b" stroke-width="1.3"/><rect x="771.8" y="188.8" width="17.4" height="7.4" fill="#92c6ee" stroke="#1f6fc0" stroke-width="1.1"/><rect x="772.4" y="199.6" width="4" height="2.8" fill="#fff" stroke="#777" stroke-width="0.9"/><rect x="778.3" y="199.6" width="4" height="2.8" fill="#fff" stroke="#777" stroke-width="0.9"/><rect x="784.4" y="199.6" width="4" height="2.8" fill="#fff" stroke="#777" stroke-width="0.9"/><rect x="772.4" y="204.8" width="4" height="2.8" fill="#fff" stroke="#777" stroke-width="0.9"/><rect x="778.3" y="204.8" width="4" height="2.8" fill="#fff" stroke="#777" stroke-width="0.9"/><rect x="784.4" y="204.8" width="4" height="2.8" fill="#fff" stroke="#777" stroke-width="0.9"/><rect x="772.4" y="209.7" width="4" height="2.8" fill="#fff" stroke="#777" stroke-width="0.9"/><rect x="778.3" y="209.7" width="4" height="2.8" fill="#fff" stroke="#777" stroke-width="0.9"/><rect x="784.4" y="209.7" width="4" height="2.8" fill="#fff" stroke="#777" stroke-width="0.9"/><path d="M606.5 239.2 H611.5 L609 241.8 Z" fill="#666"/><path d="M777.8 239 H783 L780.4 241.6 Z" fill="#666"/><path d="M1167.2 129.4 L1176.8 138.8 M1176.8 129.4 L1167.2 138.8" stroke="#fff" stroke-width="2.1"/><circle cx="1157.3" cy="291.4" r="5.2" fill="none" stroke="#333" stroke-width="1.1"/><path d="M1153.6 295.2 L1148.4 300.6" stroke="#333" stroke-width="1.2"/></svg>
</body></html>
